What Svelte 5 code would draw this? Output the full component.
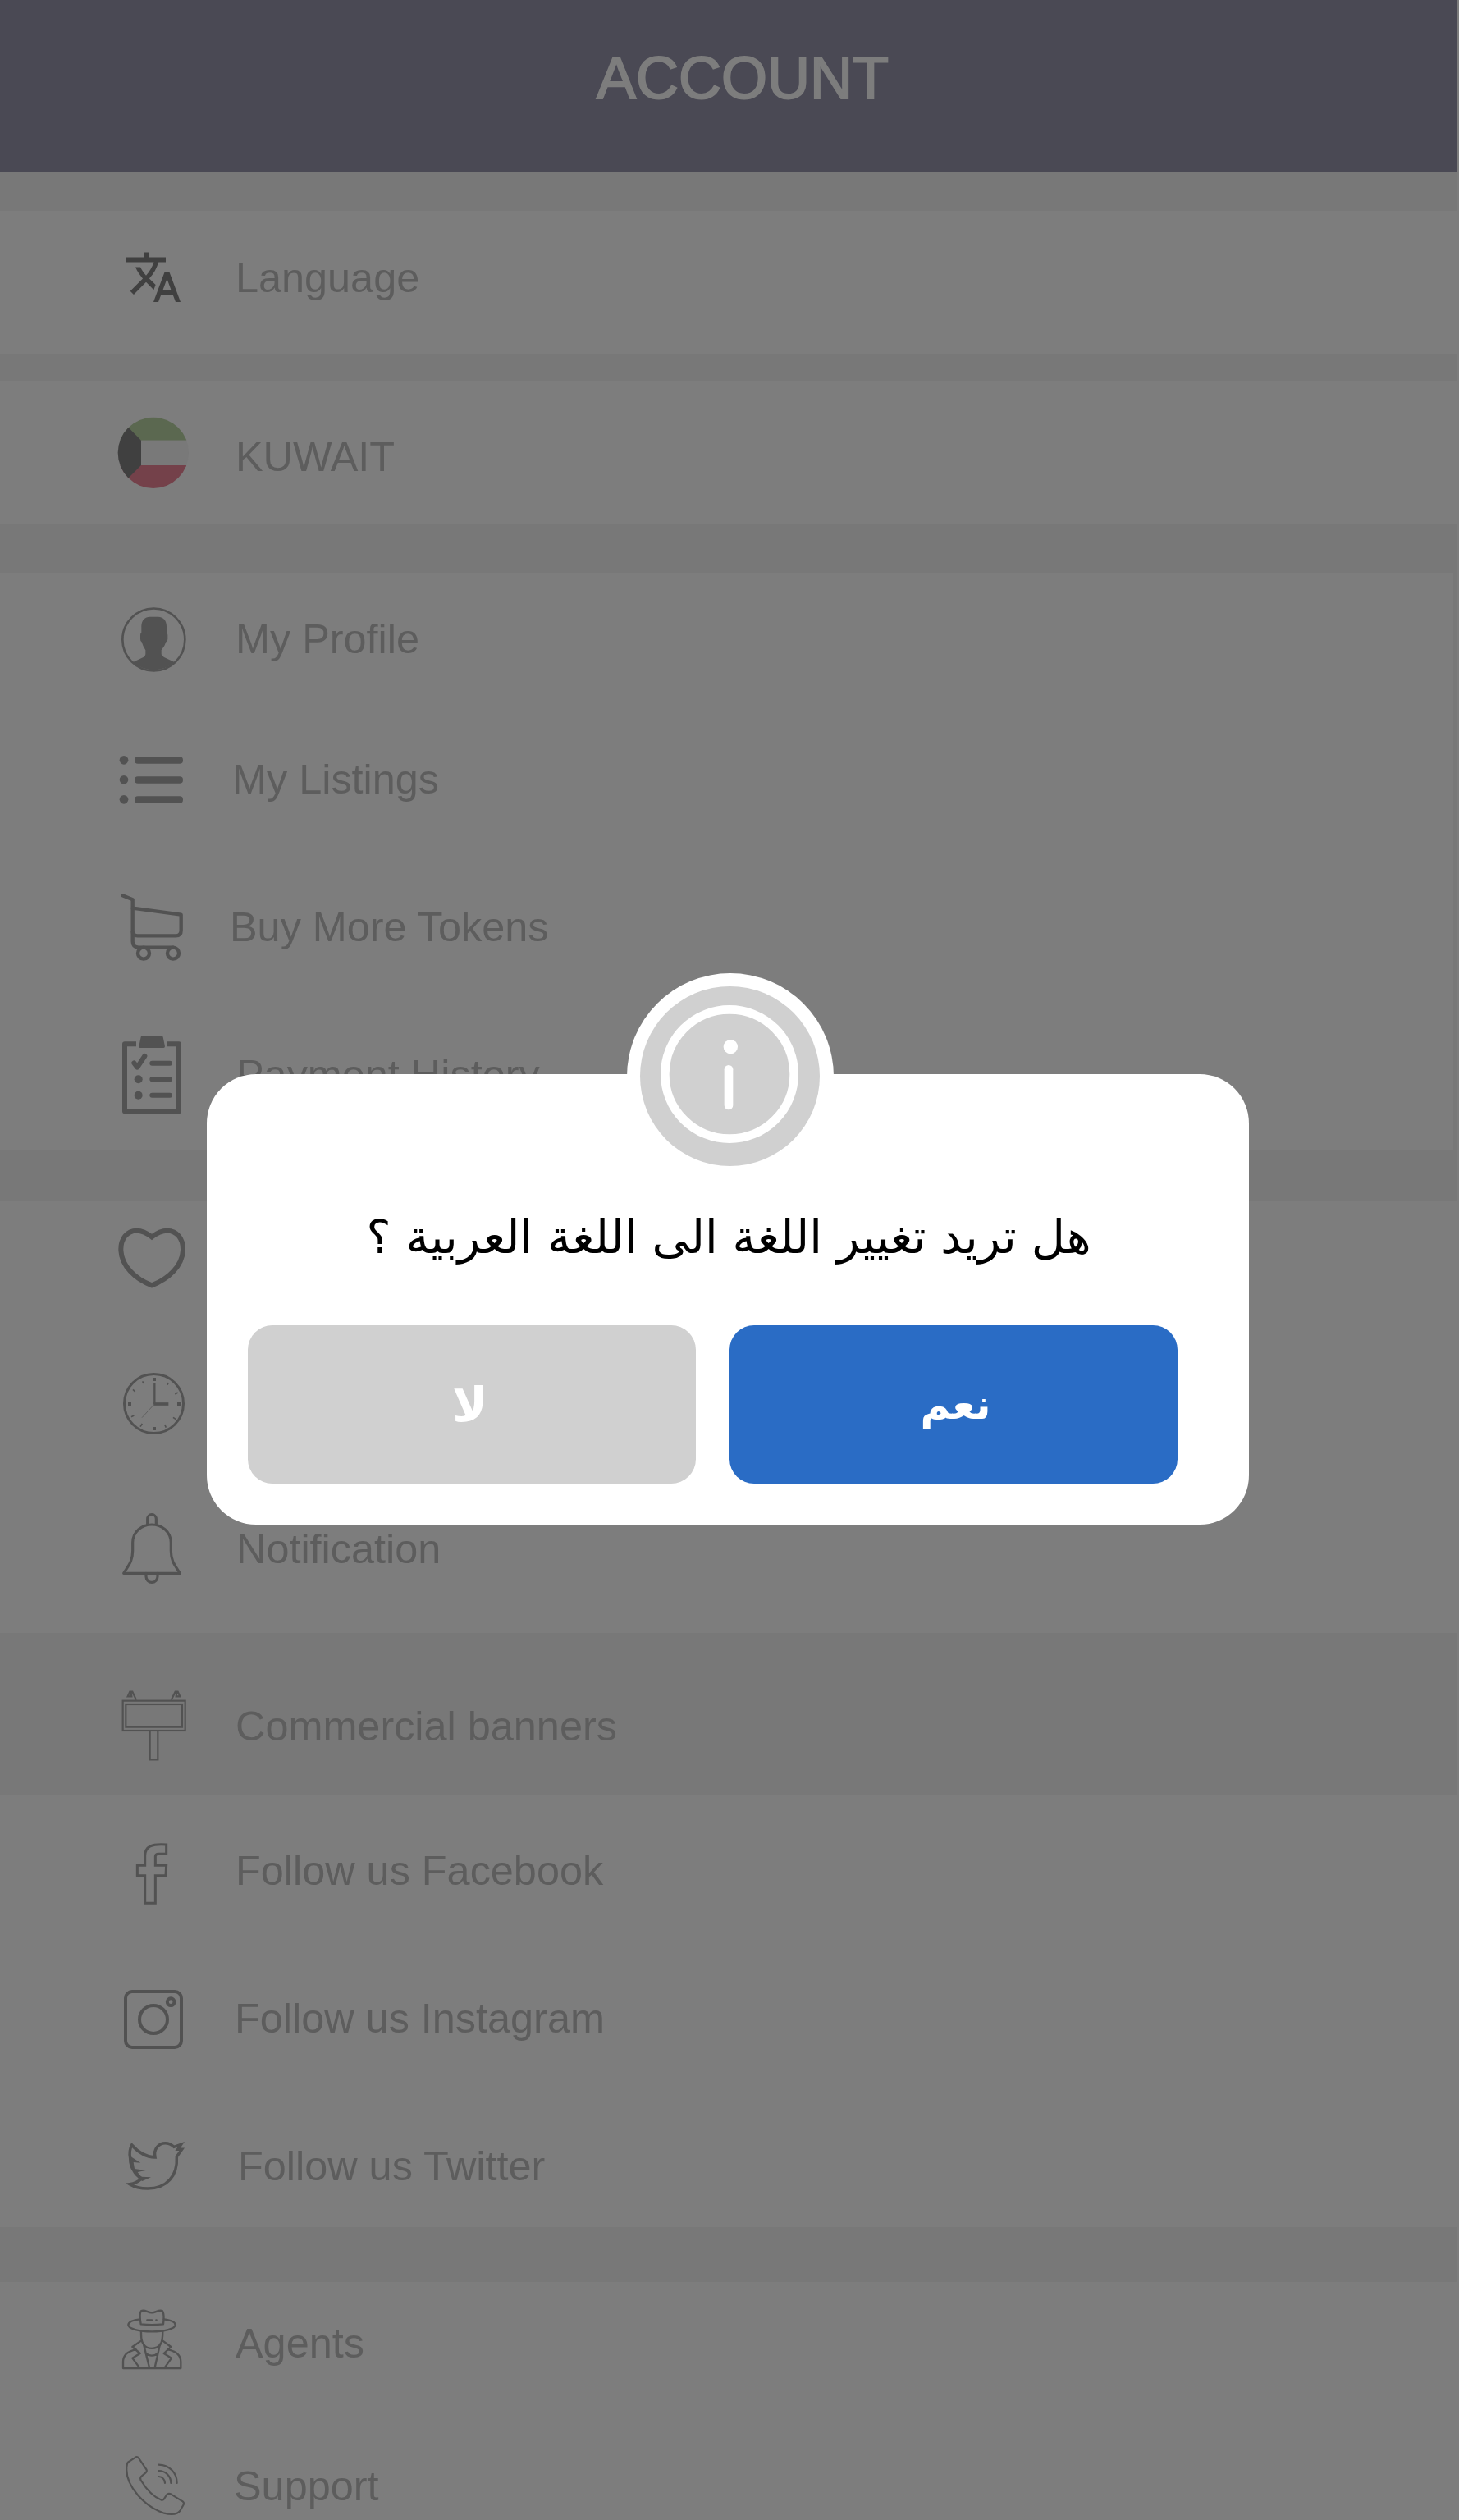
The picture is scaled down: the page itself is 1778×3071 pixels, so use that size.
<script>
  const groups = [
    { name: 'language', rows: [{ icon: 'language', label: 'Language', view: '30 12 330 330' }] },
    { name: 'country', rows: [{ icon: 'flag', label: 'KUWAIT', view: '30 666 330 330' }] },
    {
      name: 'personal',
      rows: [
        { icon: 'profile', label: 'My Profile', view: '30 42 330 330' },
        { icon: 'listings', label: 'My Listings', view: '30 555 330 330' },
        { icon: 'cart', label: 'Buy More Tokens', view: '30 45 330 330' },
        { icon: 'payment', label: 'Payment History', view: '30 585 330 330' }
      ]
    },
    {
      name: 'activity',
      rows: [
        { icon: 'heart', view: '30 76 330 330' },
        { icon: 'clock', view: '30 579 330 330' },
        { icon: 'bell', label: 'Notification', view: '30 1119 330 330' }
      ]
    },
    { name: 'banners', rows: [{ icon: 'billboard', label: 'Commercial banners', view: '30 87 330 330' }] },
    {
      name: 'social',
      rows: [
        { icon: 'facebook', label: 'Follow us Facebook', view: '30 615 330 330' },
        { icon: 'instagram', label: 'Follow us Instagram', view: '30 15 330 330' },
        { icon: 'twitter', label: 'Follow us Twitter', view: '30 555 330 330' }
      ]
    },
    {
      name: 'help',
      rows: [
        { icon: 'agents', label: 'Agents', view: '30 63 330 330' },
        { icon: 'support', label: 'Support', view: '30 585 330 330' }
      ]
    }
  ];
</script>

<div class="page">
  <header><h1>ACCOUNT</h1></header>

  <main>
    {#each groups as group}
      <section class={group.name}>
        {#each group.rows as row}
          <div class="row {row.icon}">
            <svg class="icon" viewBox={row.view} aria-hidden="true">
              {#if row.icon === 'language'}
                <path class="black" transform="translate(93 64) scale(9 9.1)" d="M12.87 15.07l-2.54-2.51.03-.03c1.74-1.94 2.98-4.17 3.71-6.53H17V4h-7V2H8v2H1v1.99h11.17C11.5 7.92 10.44 9.75 9 11.35 8.07 10.32 7.3 9.19 6.69 8h-2c.73 1.63 1.73 3.17 2.98 4.56l-5.09 5.02L4 19l5-5 3.11 3.11.76-2.04zM18.5 10h-2L12 22h2l1.12-3h4.75L21 22h2l-4.5-12zm-2.62 7l1.62-4.33L19.12 17h-3.24z" />
              {:else if row.icon === 'flag'}
                <clipPath id="disc"><circle cx="200.5" cy="815.5" r="129.5" /></clipPath>
                <g clip-path="url(#disc)">
                  <path class="green" d="M60 680H340V770H60z" />
                  <path class="white" d="M60 770H340V861H60z" />
                  <path class="red" d="M60 861H340V950H60z" />
                  <path class="black" d="M60 672L156 770V861L60 957z" />
                </g>
              {:else if row.icon === 'profile'}
                <circle class="line" cx="202" cy="208.500" r="114" stroke-width="8" />
                <path class="fill" d="M157 182V160C157 138 170 125 188 125H218C238 125 249 140 249 160V182Q253 184 253 192V206Q253 215 247 217Q243 232 230 247V262Q232 269 240 273L278 291A116 116 0 0 1 126 291L164 273Q172 269 172 262V247Q162 232 158 217Q153 215 153 206V192Q153 184 157 182Z" />
              {:else if row.icon === 'listings'}
                {#each [649, 721, 793] as y}
                  <circle class="fill" cx="93" cy={y} r="16" />
                  <rect class="fill" x="132" y={y - 12} width="177" height="25" rx="12" />
                {/each}
              {:else if row.icon === 'cart'}
                <g class="line" stroke-width="13">
                  <path d="M88 94L125 109V262Q125 284 147 284H273" />
                  <path d="M125 140L302 164V222Q302 241 283 241H143Q125 241 125 226" />
                  <circle cx="165" cy="305" r="21" />
                  <circle cx="273" cy="305" r="21" />
                </g>
              {:else if row.icon === 'payment'}
                <path class="line butt" stroke-width="18" d="M138 637H96V883H294V637H251" />
                <path class="fill" d="M160 606H230Q235 606 236 611L243 646Q243 651 238 651H153Q147 651 148 646L155 611Q156 606 160 606z" />
                <path class="line" stroke-width="18" d="M130 706L142 722L169 681M196 707H261M196 766H261M196 824H261" />
                <circle class="fill" cx="146" cy="766" r="15" />
                <circle class="fill" cx="146" cy="824" r="15" />
              {:else if row.icon === 'heart'}
                <path class="line sharp" stroke-width="18" d="M195 140C177 126 160 117 140 117C103 117 82 148 82 185C82 245 135 295 195 317C255 295 309 245 309 185C309 148 288 117 251 117C230 117 213 126 195 140Z" />
              {:else if row.icon === 'clock'}
                <circle class="line" cx="202.500" cy="751.500" r="108" stroke-width="9" />
                <path class="fill" d="M198 657h12v12h-12zM198 837h12v12h-12zM108 747h12v12h-12zM288 747h12v12h-12z" />
                <path class="line butt" stroke-width="5" d="M161 670l4 8M256 675l-4 8M126 700l8 8M290 711l-10 6M120 800l10-5M153 836l7-11M242 828l5 11M273 802l10 7" />
                <path class="line butt" stroke-width="7" d="M205 678V753" />
                <path class="line butt" stroke-width="11" d="M202 753H256" />
                <path class="line butt" stroke-width="2" d="M203 755L159 803" />
              {:else if row.icon === 'bell'}
                <g class="line" stroke-width="9.500">
                  <path d="M92 1372C108 1345 125 1330 125 1290V1260C125 1220 158 1194 195 1194S265 1220 265 1260V1290C265 1330 282 1345 298 1372Z" />
                  <path d="M179 1194V1174a16 17 0 0 1 32 0V1194M174 1372V1384a21 21 0 0 0 42 0V1372" />
                </g>
              {:else if row.icon === 'billboard'}
                <g class="line sharp" stroke-width="6.500">
                  <rect x="89" y="158" width="228" height="109" />
                  <rect x="100" y="171" width="206" height="83" />
                  <path d="M188 267V373H217V267M138 155L124 125H115L107 142H121L119 128M266 155L281 125H290L298 142H284L286 128" />
                </g>
              {:else if row.icon === 'facebook'}
                <path class="line sharp" stroke-width="9" d="M248 684C196 680 170 690 170 725V760H142V797H170V898H208V797H246L248 760H208V727Q208 718 220 718H248Z" />
              {:else if row.icon === 'instagram'}
                <g class="line" stroke-width="12">
                  <rect x="99" y="81" width="204" height="204" rx="24" />
                  <circle cx="201" cy="183" r="51" />
                  <circle cx="264.500" cy="119" r="13" />
                </g>
              {:else if row.icon === 'twitter'}
                <path class="line sharp" stroke-width="10.500" d="M122 642C148 672 178 686 207 687C200 655 222 635 244 635C258 635 268 641 276 649L302 640L290 658L305 658L286 685C290 755 250 801 180 801C152 801 132 796 114 785C130 783 146 776 158 764C146 757 136 750 130 737C119 722 116 708 116 690C113 675 114 657 122 642Z" />
                <path class="fill" d="M114 682L154 707L128 705L132 729L173 735L143 741L156 758L192 760L160 774L146 764L120 725Z" />
              {:else if row.icon === 'agents'}
                <g class="line" stroke-width="7">
                  <path d="M155 157C151 135 151 115 156 109C168 102 180 115 195 115C210 115 222 102 234 109C239 118 240 135 237 157C210 160 180 160 155 157Z" />
                  <path d="M152 139C125 141 109 150 109 160C109 174 150 184 195 184S281 174 281 160C281 150 265 142 239 139" />
                  <path d="M178 142H195M211 142H212" />
                  <path d="M156 184C156 205 156 220 166 232C178 250 212 250 226 232C234 220 235 205 235 184" />
                  <path d="M157 217L124 240L152 264L124 281L150 316M234 217L265 240L239 264L267 281L242 316M165 230L186 316M225 230L206 316M172 263C185 275 205 275 218 263" />
                  <path d="M137 250C105 256 90 272 90 295V318H301V295C301 272 285 256 254 250" />
                </g>
              {:else}
                <g class="line" stroke-width="6.500">
                  <path d="M109 661L137 643Q144 640 148 648L175 688Q179 695 172 701L156 714Q150 722 158 732C175 760 200 787 228 799Q234 802 239 797L250 780Q256 774 264 778L308 805Q314 810 311 817L299 838C290 852 270 855 240 848C170 825 100 750 103 685Q102 668 109 661Z" />
                  <path d="M220 671C258 671 287 700 287 738M220 693C245 693 265 712 265 738M220 714C233 714 243 725 243 738" />
                </g>
              {/if}
            </svg>
            {#if row.label}<span class="label">{row.label}</span>{/if}
          </div>
        {/each}
      </section>
    {/each}
  </main>

  <div class="dialog" role="dialog" aria-modal="true">
    <svg class="badge" viewBox="72 78 756 756" aria-hidden="true">
      <circle class="paper" cx="450" cy="456" r="378" />
      <circle class="disc" cx="448.500" cy="454.500" r="328.500" />
      <circle class="ring" cx="447" cy="447" r="236" />
      <circle class="paper" cx="451" cy="347" r="26" />
      <rect class="paper" x="428" y="414" width="32" height="163" rx="16" />
    </svg>
    <p dir="rtl">هل تريد تغيير اللغة الى اللغة العربية ؟</p>
    <div class="actions">
      <button class="no">لا</button>
      <button class="yes">نعم</button>
    </div>
  </div>
</div>

<style>
  :global(body) {
    margin: 0;
  }
  .page {
    position: relative;
    width: 1778px;
    height: 3071px;
    overflow: hidden;
    background: #7d7d7d;
    font-family: 'Liberation Sans', Arial, sans-serif;
  }
  header {
    box-sizing: border-box;
    width: 1776px;
    height: 210px;
    padding-left: 34px;
    background: #4a4954;
    display: flex;
    justify-content: center;
  }
  h1 {
    margin: 55px 0 0;
    font-size: 72px;
    line-height: 80px;
    font-weight: 400;
    color: #7d7d7d;
    -webkit-text-stroke: 2px #7d7d7d;
  }
  main {
    display: flex;
    flex-direction: column;
    width: 1776px;
    height: 2861px;
    background: #787878;
  }
  section {
    flex: none;
    box-sizing: border-box;
    background: #7d7d7d;
    overflow: hidden;
  }
  section.language {
    height: 175px;
    margin-top: 47px;
  }
  section.country {
    height: 175px;
    margin-top: 32px;
    padding-top: 3px;
  }
  section.personal {
    width: 1771px;
    height: 703px;
    margin-top: 59px;
  }
  section.activity {
    height: 516px;
    margin-top: 62px;
  }
  section.activity,
  section.social {
    height: 527px;
  }
  section.banners {
    height: 197px;
    padding-top: 24px;
    background: #787878;
  }
  section.social {
    padding-top: 3px;
  }
  section.help {
    height: 290px;
    margin-top: 67px;
  }
  .row {
    display: flex;
    align-items: center;
    height: 180px;
    padding-left: 130px;
  }
  .row.language {
    height: 164px;
  }
  .row.profile {
    height: 162px;
  }
  .row.heart {
    height: 155px;
  }
  .row.agents {
    height: 150px;
  }
  .row.support {
    height: 198px;
  }
  .icon {
    flex: none;
    width: 110px;
    height: 110px;
  }
  .label {
    margin-left: 47px;
    font-size: 50.4px;
    line-height: 60px;
    color: #5d5d5d;
    white-space: nowrap;
  }
  .listings .label {
    margin-left: 43px;
  }
  .cart .label {
    margin-left: 40px;
  }
  .payment .label,
  .bell .label {
    margin-left: 48px;
  }
  .instagram .label {
    margin-left: 46px;
  }
  .twitter .label {
    margin-left: 50px;
  }
  .support .label {
    margin-left: 45px;
  }
  .fill {
    fill: #525252;
  }
  .line {
    fill: none;
    stroke: #525252;
    stroke-linecap: round;
    stroke-linejoin: round;
  }
  .sharp {
    stroke-linejoin: miter;
    stroke-linecap: butt;
  }
  .butt {
    stroke-linecap: butt;
  }
  .black {
    fill: #404040;
  }
  .green {
    fill: #5b6850;
  }
  .white {
    fill: #797979;
  }
  .red {
    fill: #74414a;
  }
  .dialog {
    position: absolute;
    left: 252px;
    top: 1309px;
    box-sizing: border-box;
    width: 1270px;
    height: 549px;
    padding: 158px 48px 0 50px;
    border-radius: 60px;
    background: #fff;
  }
  .badge {
    position: absolute;
    left: 512px;
    top: -123px;
    width: 252px;
    height: 252px;
  }
  .paper {
    fill: #fff;
  }
  .disc {
    fill: #d0d0d0;
  }
  .ring {
    fill: none;
    stroke: #fff;
    stroke-width: 32;
  }
  p {
    height: 148px;
    margin: 0;
    text-align: center;
    font-family: 'DejaVu Sans', sans-serif;
    font-size: 56.6px;
    line-height: 80px;
    color: #000;
    white-space: nowrap;
  }
  .actions {
    display: flex;
    gap: 41px;
  }
  button {
    width: 546px;
    height: 193px;
    padding: 0;
    border: 0;
    border-radius: 30px;
    font-family: 'DejaVu Sans', sans-serif;
    font-weight: 700;
    color: #fff;
  }
  .no {
    padding-right: 5px;
    background: #d0d0d0;
    font-size: 58px;
  }
  .yes {
    padding-left: 5px;
    background: #2a6cc5;
    font-size: 50px;
  }
</style>
